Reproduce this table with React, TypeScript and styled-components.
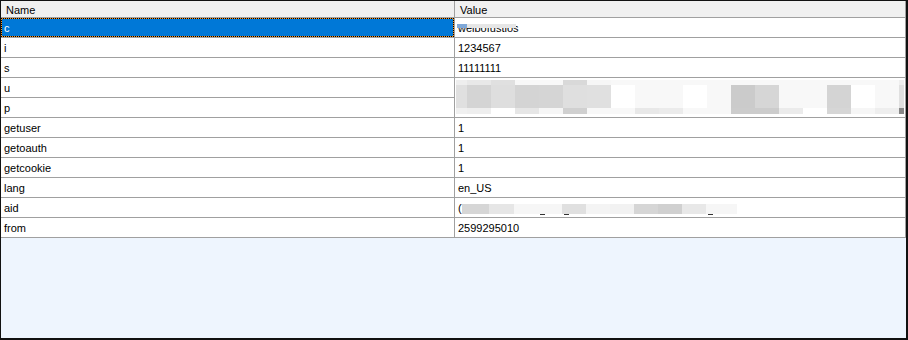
import * as React from 'react';
import styled, { createGlobalStyle } from 'styled-components';

const GlobalStyle = createGlobalStyle`
    html, body {
        margin: 0;
        padding: 0;
        background: #ffffff;
    }
`;

interface Row {
    name: string;
    value?: string;
    kind?: 'text' | 'smudge' | 'mosaic' | 'partial' | 'none';
    span?: number;
}

const rows: Row[] = [
    { name: 'c', value: 'weibofustios', kind: 'smudge' },
    { name: 'i', value: '1234567' },
    { name: 's', value: '11111111' },
    { name: 'u', kind: 'mosaic', span: 2 },
    { name: 'p', kind: 'none' },
    { name: 'getuser', value: '1' },
    { name: 'getoauth', value: '1' },
    { name: 'getcookie', value: '1' },
    { name: 'lang', value: 'en_US' },
    { name: 'aid', value: '(', kind: 'partial' },
    { name: 'from', value: '2599295010' },
];

// pixelated redaction: column widths + top / middle / bottom shade of each column
const mosaicWidths = [11, 24, 24, 24, 24, 24, 24, 24, 24, 24, 24, 24, 24, 24, 24, 24, 24, 24, 24, 5];
const mosaicTop = ['ee', 'e8', 'e0', 'f8', 'f8', 'd9', 'f6', 'f8', 'f8', 'f8', 'f8', 'f8', 'f8', 'f8', 'f8', 'f8', 'f8', 'f8', 'f8', 'ee'];
const mosaicMid = ['e0', 'd4', 'de', 'd4', 'd5', 'df', 'e0', 'ff', 'f8', 'f8', 'ff', 'f8', 'cb', 'd6', 'f8', 'f8', 'd4', 'ff', 'f8', 'e0'];
const mosaicBot = ['f0', 'ee', 'ff', 'e6', 'f6', 'd0', 'f8', 'f8', 'e8', 'eb', 'f8', 'f8', 'cc', 'cc', 'eb', 'ff', 'd6', 'f6', 'ee', '88'];

const aidBlocks = [
    { w: 27, c: 'd6', u: false },
    { w: 25, c: 'e6', u: false },
    { w: 24, c: 'f6', u: false },
    { w: 24, c: 'f6', u: true },
    { w: 24, c: 'e0', u: true },
    { w: 24, c: 'f4', u: false },
    { w: 24, c: 'f2', u: false },
    { w: 24, c: 'd6', u: false },
    { w: 24, c: 'd0', u: false },
    { w: 24, c: 'e8', u: false },
    { w: 31, c: 'f6', u: true },
];

const Frame = styled.div`
    width: 908px;
    height: 340px;
    box-sizing: border-box;
    border-top: 1px solid #111;
    border-left: 1px solid #111;
    border-right: 2px solid #111;
    border-bottom: 2px solid #111;
    background: #eef5fe;
    font-family: "Liberation Sans", Arial, sans-serif;
    font-size: 11px;
    color: #000;
    overflow: hidden;
`;

const Grid = styled.div`
    display: grid;
    grid-template-columns: 454px 451px;
    grid-auto-rows: 20px;
    grid-template-rows: 17px;
`;

const HeadCell = styled.div`
    box-sizing: border-box;
    background: #f0f0f0;
    border-right: 1px solid #a0a0a0;
    border-bottom: 1px solid #a0a0a0;
    padding: 2px 0 0 5px;
    line-height: 14px;
    white-space: nowrap;
`;

const Cell = styled.div<{ $span?: number; $col: number; $selected?: boolean }>`
    position: relative;
    box-sizing: border-box;
    grid-column: ${p => p.$col};
    grid-row: ${p => (p.$span ? `span ${p.$span}` : 'auto')};
    background: ${p => (p.$selected ? '#0078d7' : '#ffffff')};
    color: ${p => (p.$selected ? '#ffffff' : '#000000')};
    border-right: 1px solid #a0a0a0;
    border-bottom: 1px solid #a0a0a0;
    padding: 1px 0 0 3px;
    line-height: 18px;
    white-space: nowrap;
    overflow: hidden;

    ${p => p.$selected && `
        &::before, &::after {
            content: '';
            position: absolute;
            inset: 0;
            box-sizing: border-box;
        }
        &::before {
            border: 1px solid #f7931e;
        }
        &::after {
            border: 1px dotted #000;
        }
    `}
`;

const Smudge = styled.span`
    position: relative;
    display: inline-block;
`;

const SmudgeBar = styled.span<{ $blue?: boolean; $w: number; $left: number }>`
    position: absolute;
    top: 5px;
    left: ${p => p.$left}px;
    width: ${p => p.$w}px;
    height: 4px;
    background: ${p => (p.$blue ? '#7fa8d8' : '#e6e6e6')};
`;

const Mosaic = styled.div`
    display: flex;
    margin: 1px 0 0 -2px;
`;

const MosaicCol = styled.div`
    display: flex;
    flex-direction: column;
    flex-shrink: 0;
`;

const Tile = styled.div<{ $h: number; $shade: string }>`
    height: ${p => p.$h}px;
    background: #${p => p.$shade}${p => p.$shade}${p => p.$shade};
`;

const Partial = styled.div`
    display: flex;
    align-items: center;
    height: 18px;
`;

const AidBlock = styled.div<{ $shade: string; $under: boolean }>`
    position: relative;
    flex-shrink: 0;
    height: 10px;
    margin-top: 1px;
    background: #${p => p.$shade}${p => p.$shade}${p => p.$shade};
    ${p => p.$under && `
        &::after {
            content: '';
            position: absolute;
            left: 2px;
            bottom: -1px;
            width: 5px;
            height: 1px;
            background: #333;
        }
    `}
`;

const renderValue = (r: Row) => {
    if (r.kind === 'smudge') {
        return (
            <Smudge>
                {r.value}
                <SmudgeBar $blue $left={-1} $w={10} />
                <SmudgeBar $left={9} $w={49} />
            </Smudge>
        );
    }
    if (r.kind === 'mosaic') {
        return (
            <Mosaic>
                {mosaicWidths.map((w, i) => (
                    <MosaicCol key={i} style={{ width: w }}>
                        <Tile $h={5} $shade={mosaicTop[i]} />
                        <Tile $h={23} $shade={mosaicMid[i]} />
                        <Tile $h={6} $shade={mosaicBot[i]} />
                    </MosaicCol>
                ))}
            </Mosaic>
        );
    }
    if (r.kind === 'partial') {
        return (
            <Partial>
                <span>{r.value}</span>
                {aidBlocks.map((b, i) => (
                    <AidBlock key={i} $shade={b.c} $under={b.u} style={{ width: b.w }} />
                ))}
            </Partial>
        );
    }
    return r.value;
};

const App: React.FunctionComponent = () => {
    return (
        <>
            <GlobalStyle />
            <Frame>
                <Grid>
                    <HeadCell>Name</HeadCell>
                    <HeadCell>Value</HeadCell>
                    {rows.map((r, i) => (
                        <React.Fragment key={r.name}>
                            <Cell $col={1} $selected={i === 0}>{r.name}</Cell>
                            {r.kind === 'none' ? null : (
                                <Cell $col={2} $span={r.span}>{renderValue(r)}</Cell>
                            )}
                        </React.Fragment>
                    ))}
                </Grid>
            </Frame>
        </>
    );
};

export default App;
